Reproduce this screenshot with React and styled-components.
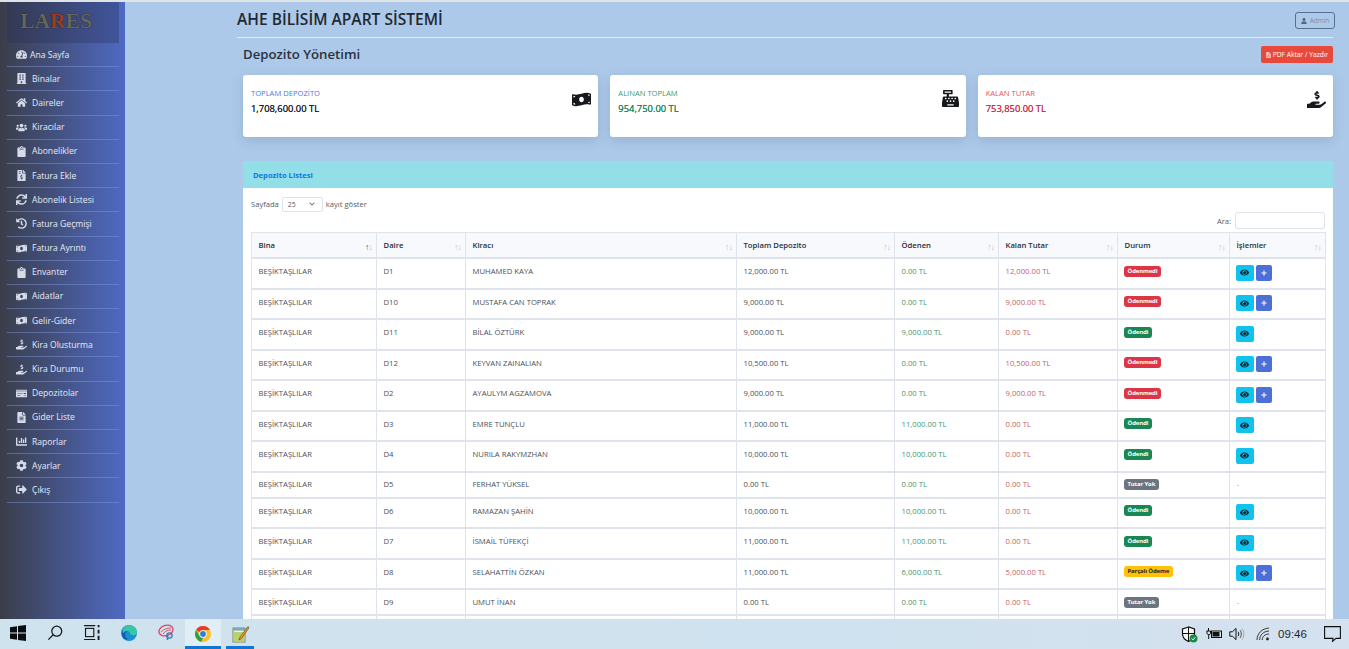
import styled, { createGlobalStyle } from "styled-components";
import * as FaIcons from "react-icons/fa";

const GlobalStyle = createGlobalStyle`
  html, body {
    margin: 0;
    height: 100%;
    overflow: hidden;
    background: #adc9e9;
    font-family: "Open Sans", "Noto Sans", sans-serif;
  }
  * { box-sizing: border-box; }
`;

const Screen = styled.div`
  height: 649px;
  display: grid;
  grid-template-rows: 1fr 30px;
  overflow: hidden;
  border-top: 2px solid #dfe3e8;
`;

const Page = styled.div`
  display: flex;
  min-height: 0;
  overflow: hidden;
`;

const Sidebar = styled.nav`
  width: 125px;
  flex: none;
  background: linear-gradient(90deg, #3a3d49 0%, #4f6ac4 100%);
  padding: 0 6px 0 7px;
`;

const Logo = styled.div`
  height: 41px;
  padding-right: 14px;
  background: rgba(40, 50, 90, 0.35);
  font-family: "Liberation Serif", serif;
  font-size: 21.5px;
  font-weight: 700;
  text-align: center;
  line-height: 39px;
  color: #66665c;
  text-shadow: 0 0 1px #111;
  span { color: #9a3d20; }
`;

const MenuItem = styled.div`
  height: 24.2px;
  display: flex;
  align-items: center;
  padding-left: 9px;
  border-bottom: 1px solid rgba(130, 155, 225, 0.45);
  color: #e6eaf6;
  font-size: 8.6px;
  white-space: nowrap;
  svg { width: 11px; height: 11px; flex: none; color: #d5dbe8; }
`;

const MenuIcon = styled.span`
  width: ${({ $first }) => ($first ? "14px" : "16px")};
  flex: none;
  display: flex;
  align-items: center;
`;

const Main = styled.main`
  flex: 1;
  min-width: 0;
  padding: 0 16px 0 112px;
  overflow: hidden;
`;

const Topbar = styled.header`
  height: 36px;
  display: flex;
  align-items: center;
  justify-content: space-between;
  border-bottom: 1px solid #e3ebf6;
  padding-bottom: 1px;
`;

const Brand = styled.h1`
  margin: 0;
  font-size: 15.55px;
  font-weight: 600;
  color: #212833;
`;

const AdminButton = styled.div`
  width: 40px;
  height: 17px;
  margin: 3px -2px 0 0;
  border: 1px solid #56708f;
  border-radius: 3px;
  color: #7a8da5;
  font-size: 6.5px;
  display: flex;
  align-items: center;
  justify-content: center;
  gap: 3px;
  svg { width: 6px; height: 6px; color: #56657a; }
`;

const Content = styled.div`
  padding-left: 6px;
`;

const TitleRow = styled.div`
  height: 37px;
  padding-bottom: 5px;
  display: flex;
  align-items: center;
  justify-content: space-between;
`;

const PageTitle = styled.h2`
  margin: 0;
  font-size: 13.2px;
  font-weight: 600;
  color: #2a3240;
`;

const PdfButton = styled.div`
  width: 72px;
  height: 17px;
  margin-top: 1px;
  border-radius: 2px;
  background: #e74a3b;
  color: #fff;
  font-size: 6.7px;
  display: flex;
  align-items: center;
  justify-content: center;
  gap: 2px;
  white-space: nowrap;
  svg { width: 5px; height: 6px; opacity: 0.7; }
`;

const Cards = styled.section`
  display: grid;
  grid-template-columns: repeat(3, 1fr);
  gap: 12px;
`;

const Card = styled.article`
  height: 62px;
  background: #fff;
  border-radius: 3px;
  box-shadow: 0 4px 12px rgba(58, 80, 120, 0.18);
  padding: 13px 7px 13px 8px;
  display: flex;
  justify-content: space-between;
`;

const CardLabel = styled.div`
  font-size: 7.6px;
  line-height: 11px;
  color: ${({ $color }) => $color};
  opacity: 0.85;
`;

const CardValue = styled.div`
  margin-top: 3px;
  font-size: 9.4px;
  line-height: 13px;
  font-weight: 500;
  text-shadow: 0 0 0.4px ${({ $color }) => $color};
  color: ${({ $color }) => $color};
`;

const CardIcon = styled.div`
  color: #16181c;
  line-height: 0;
  margin-top: 2px;
  svg { width: ${({ $size }) => $size}px; height: ${({ $size }) => $size}px; }
`;

const ListCard = styled.section`
  margin-top: 24px;
  background: #fff;
  border-radius: 3px 3px 0 0;
`;

const ListHeader = styled.div`
  height: 27px;
  background: #92dfe8;
  display: flex;
  align-items: center;
  padding-left: 10px;
  font-size: 7.6px;
  font-weight: 700;
  color: #1173e6;
`;

const ListBody = styled.div`
  padding: 0 8px;
`;

const LengthRow = styled.div`
  height: 25px;
  padding-top: 7px;
  display: flex;
  align-items: center;
  gap: 3px;
  font-size: 7.6px;
  color: #555c66;
`;

const LengthSelect = styled.div`
  width: 41px;
  height: 15px;
  border: 1px solid #dfe3e8;
  border-radius: 2px;
  display: flex;
  align-items: center;
  justify-content: space-between;
  padding: 0 7px 0 5px;
  font-size: 7px;
  svg { width: 6px; height: 6px; color: #777; }
`;

const SearchRow = styled.div`
  height: 17px;
  margin-top: -1px;
  display: flex;
  align-items: center;
  justify-content: flex-end;
  gap: 4px;
  font-size: 7.6px;
  color: #555c66;
`;

const SearchBox = styled.div`
  width: 90px;
  height: 17px;
  border: 1px solid #dfe3e8;
  border-radius: 2px;
`;

const Table = styled.table`
  width: 1074px;
  border-collapse: collapse;
  table-layout: fixed;
  margin-top: 3px;
  font-size: 7.7px;
  color: #4b5059;
`;

const Th = styled.th`
  height: 25.9px;
  padding: 0 6.5px;
  background: #f7f9fc;
  border: 1px solid #dfe3ec;
  border-bottom: 2px solid #dfe3ec;
  text-align: left;
  font-weight: 600;
  color: #2a2f38;
  position: relative;
`;

const SortArrows = styled.span`
  position: absolute;
  right: 4px;
  top: 7px;
  font-size: 9px;
  font-weight: 400;
  letter-spacing: -1px;
  color: #c3c8d0;
  b { font-weight: 400; color: ${({ $active }) => ($active ? "#666" : "#c3c8d0")}; }
`;

const Td = styled.td`
  height: ${({ $short }) => ($short ? "26px" : "30.5px")};
  padding: 0 6.5px;
  padding-bottom: ${({ $short }) => ($short ? "1px" : "5px")};
  border: 1px solid #dfe3ec;
  border-top: none;
  border-bottom: 2px solid #dfe3ec;
  white-space: nowrap;
  color: ${({ $color }) => $color || "inherit"};
`;

const Badge = styled.span`
  display: inline-block;
  margin-left: -0.5px;
  padding: 0 3.5px;
  height: 11px;
  line-height: 11px;
  border-radius: 3px;
  font-size: 6px;
  font-weight: 700;
  letter-spacing: -0.15px;
  background: ${({ $bg }) => $bg};
  color: ${({ $fg }) => $fg || "#fff"};
  vertical-align: middle;
`;

const Actions = styled.div`
  display: flex;
  gap: 2px;
  margin: 3px 0 0 -1px;
`;

const ActionButton = styled.div`
  width: ${({ $plus }) => ($plus ? "16px" : "18px")};
  height: 16px;
  border-radius: 2px;
  background: ${({ $plus }) => ($plus ? "#4e6fd8" : "#10c2ee")};
  color: ${({ $plus }) => ($plus ? "#fff" : "#10222c")};
  display: flex;
  align-items: center;
  justify-content: center;
  svg { width: ${({ $plus }) => ($plus ? "6px" : "9px")}; height: ${({ $plus }) => ($plus ? "6px" : "9px")}; }
`;

const Taskbar = styled.footer`
  position: relative;
  z-index: 2;
  background: linear-gradient(90deg, #cfe3ee 0%, #cfe2ef 60%, #d5e1ee 100%);
  display: flex;
  align-items: center;
  height: 30px;
`;

const TaskSlot = styled.div`
  width: ${({ $w }) => $w || 37}px;
  margin-left: ${({ $gap }) => $gap || 0}px;
  height: 30px;
  flex: none;
  display: flex;
  align-items: center;
  justify-content: center;
  background: ${({ $active }) => ($active ? "#e2eef5" : "transparent")};
  border-bottom: 3px solid ${({ $open }) => ($open ? "#0a78d4" : "transparent")};
  padding-top: ${({ $open }) => ($open ? "3px" : "0")};
`;

const Tray = styled.div`
  margin-left: auto;
  padding-right: 8px;
  display: flex;
  align-items: center;
  height: 30px;
`;

const TrayIcon = styled.div`
  width: ${({ $w }) => $w}px;
  margin-left: ${({ $gap }) => $gap || 0}px;
  display: flex;
  justify-content: center;
  align-items: center;
`;

const Clock = styled.div`
  width: 29px;
  margin-left: 8px;
  text-align: center;
  font-family: "Liberation Sans", sans-serif;
  font-size: 11.5px;
  color: #1d2730;
`;

const menu = [
  ["Ana Sayfa", FaIcons.FaTachometerAlt, true],
  ["Binalar", FaIcons.FaBuilding],
  ["Daireler", FaIcons.FaHome],
  ["Kiracılar", FaIcons.FaUsers],
  ["Abonelikler", FaIcons.FaClipboard],
  ["Fatura Ekle", FaIcons.FaFileInvoiceDollar],
  ["Abonelik Listesi", FaIcons.FaSync],
  ["Fatura Geçmişi", FaIcons.FaHistory],
  ["Fatura Ayrıntı", FaIcons.FaMoneyBillWave],
  ["Envanter", FaIcons.FaClipboard],
  ["Aidatlar", FaIcons.FaMoneyBillWave],
  ["Gelir-Gider", FaIcons.FaMoneyBillWave],
  ["Kira Olusturma", FaIcons.FaHandHoldingUsd],
  ["Kira Durumu", FaIcons.FaHandHoldingUsd],
  ["Depozitolar", FaIcons.FaMoneyCheck],
  ["Gider Liste", FaIcons.FaFileAlt],
  ["Raporlar", FaIcons.FaChartBar],
  ["Ayarlar", FaIcons.FaCog],
  ["Çıkış", FaIcons.FaSignOutAlt],
];

const cards = [
  ["TOPLAM DEPOZİTO", "1,708,600.00 TL", "#2d62d8", "#1d2128", FaIcons.FaMoneyBillWave, 19],
  ["ALINAN TOPLAM", "954,750.00 TL", "#198754", "#198754", FaIcons.FaCashRegister, 17],
  ["KALAN TUTAR", "753,850.00 TL", "#dc3545", "#c9304a", FaIcons.FaHandHoldingUsd, 19],
];

const columns = [
  ["Bina", 125], ["Daire", 89], ["Kiracı", 271], ["Toplam Depozito", 158],
  ["Ödenen", 104], ["Kalan Tutar", 119], ["Durum", 112], ["İşlemler", 96],
];

const rows = [
  ["D1", "MUHAMED KAYA", "12,000.00 TL", "0.00 TL", "12,000.00 TL", "no"],
  ["D10", "MUSTAFA CAN TOPRAK", "9,000.00 TL", "0.00 TL", "9,000.00 TL", "no"],
  ["D11", "BİLAL ÖZTÜRK", "9,000.00 TL", "9,000.00 TL", "0.00 TL", "yes"],
  ["D12", "KEYVAN ZAINALIAN", "10,500.00 TL", "0.00 TL", "10,500.00 TL", "no"],
  ["D2", "AYAULYM AGZAMOVA", "9,000.00 TL", "0.00 TL", "9,000.00 TL", "no"],
  ["D3", "EMRE TUNÇLU", "11,000.00 TL", "11,000.00 TL", "0.00 TL", "yes"],
  ["D4", "NURILA RAKYMZHAN", "10,000.00 TL", "10,000.00 TL", "0.00 TL", "yes"],
  ["D5", "FERHAT YÜKSEL", "0.00 TL", "0.00 TL", "0.00 TL", "none"],
  ["D6", "RAMAZAN ŞAHİN", "10,000.00 TL", "10,000.00 TL", "0.00 TL", "yes"],
  ["D7", "İSMAİL TÜFEKÇİ", "11,000.00 TL", "11,000.00 TL", "0.00 TL", "yes"],
  ["D8", "SELAHATTİN ÖZKAN", "11,000.00 TL", "6,000.00 TL", "5,000.00 TL", "part"],
  ["D9", "UMUT İNAN", "0.00 TL", "0.00 TL", "0.00 TL", "none"],
];

const statusBadge = {
  no: { text: "Ödenmedi", bg: "#dc3545" },
  yes: { text: "Ödendi", bg: "#198754" },
  none: { text: "Tutar Yok", bg: "#6c757d" },
  part: { text: "Parçalı Ödeme", bg: "#ffc107", fg: "#212529" },
};

const WindowsLogo = () => (
  <svg width="16" height="16" viewBox="0 0 16 16" fill="#0b0d10">
    <path d="M0 2.2 7 1.2V7.5H0zM8 1 16 0V7.5H8zM0 8.5H7V14.8L0 13.8zM8 8.5H16V16L8 15z" />
  </svg>
);

const SearchGlyph = () => (
  <svg width="16" height="16" viewBox="0 0 18 18" fill="none" stroke="#15181c" strokeWidth="1.4">
    <circle cx="11" cy="7" r="5.6" />
    <path d="M7 11 1.5 16.5" />
  </svg>
);

const TaskViewGlyph = () => (
  <svg width="16" height="15" viewBox="0 0 17 16" fill="none" stroke="#15181c" strokeWidth="1.2">
    <path d="M0 .6H12M0 15.4H12" />
    <rect x="1.6" y="3.6" width="8.8" height="8.8" />
    <path d="M15.5 0V2.5M15.5 5V9M15.5 11.5V16" strokeWidth="2" />
  </svg>
);

const EdgeGlyph = () => (
  <svg width="16" height="16" viewBox="0 0 16 16">
    <circle cx="8" cy="8" r="8" fill="#1b8fd6" />
    <path d="M1 9C1.5 4 5 2 8 2c4 0 7 2.5 7 5.5 0 1.6-1.6 2.3-3.6 2.3-2 0-2.8-.6-2.8-1.2C8.6 7 7 6 5.5 6.8 3.5 8 3.5 12 7 14.5 4 15 1 13 1 9z" fill="#0f5ea8" />
    <path d="M2 4C4 1 7 0 9 .2c4 .4 7 3.5 7 7 0 1.8-1.6 3-4 3-1.6 0-2.8-.6-3-1.4C9 7 7 5.6 5 6 3.6 6.3 2.4 7.5 2 9z" fill="#38c7a8" />
  </svg>
);

const SnipGlyph = () => (
  <svg width="18" height="17" viewBox="0 0 18 17" fill="none">
    <ellipse cx="8" cy="6.5" rx="7.2" ry="5.2" stroke="#d9475f" strokeWidth="1.3" transform="rotate(-18 8 6.5)" />
    <path d="M3 8C6 5 9 4 13 4M5 10c2-3 5-4 8-4" stroke="#d9475f" strokeWidth=".9" />
    <circle cx="11.5" cy="11.5" r="2.6" stroke="#2f7fc4" strokeWidth="1.4" />
    <path d="M9.5 11V16" stroke="#2f7fc4" strokeWidth="1.6" />
  </svg>
);

const ChromeGlyph = () => (
  <svg width="16" height="16" viewBox="0 0 16 16">
    <circle cx="8" cy="8" r="8" fill="#fbc02d" />
    <path d="M8 0a8 8 0 0 1 6.93 4H8a4 4 0 0 0-3.46 2L1.07 4A8 8 0 0 1 8 0z" fill="#e53935" />
    <path d="M1.07 4 4.54 10A4 4 0 0 0 8 12L6.3 15.8A8 8 0 0 1 1.07 4z" fill="#2e9e4f" />
    <circle cx="8" cy="8" r="3.7" fill="#fff" />
    <circle cx="8" cy="8" r="2.9" fill="#2f7de1" />
  </svg>
);

const NotepadGlyph = () => (
  <svg width="17" height="17" viewBox="0 0 17 17">
    <rect x="1" y="2" width="12" height="14" fill="#f4f0d2" stroke="#6b6b50" strokeWidth=".8" />
    <rect x="1" y="2" width="12" height="2.6" fill="#7aa7c9" />
    <rect x="2" y="6" width="10" height="9" fill="#b9d36a" />
    <path d="M16 .5 8 11l-1 3 2.7-1.6L16.8 2z" fill="#e8a21a" stroke="#5b3a10" strokeWidth=".6" />
  </svg>
);

const ShieldGlyph = () => (
  <svg width="17" height="17" viewBox="0 0 17 17" fill="none">
    <path d="M7.5 1 1.5 3v5c0 3.5 2.6 6 6 7.5 3.4-1.5 6-4 6-7.5V3z" stroke="#111" strokeWidth="1.2" fill="#f4f8fb" />
    <path d="M7.5 1V15M1.5 7.5H13.5" stroke="#111" strokeWidth="1" />
    <circle cx="12.5" cy="12.5" r="4" fill="#1a8a4a" />
    <path d="M10.6 12.6l1.3 1.3 2.3-2.6" stroke="#fff" strokeWidth="1" />
  </svg>
);

const PowerGlyph = () => (
  <svg width="16" height="12" viewBox="0 0 16 12" fill="none" stroke="#111">
    <rect x="5.5" y="3" width="10" height="6.5" strokeWidth="1" />
    <rect x="6.5" y="4" width="7" height="4.5" fill="#111" stroke="none" />
    <path d="M2.5 0V3M.5 3H4.5V5.5C4.5 7 1 7 1 5.5V3M2.7 7V11" strokeWidth="1" />
  </svg>
);

const VolumeGlyph = () => (
  <svg width="16" height="14" viewBox="0 0 16 14" fill="none" stroke="#111" strokeWidth="1">
    <path d="M.8 4.8H3.4L7 1.4V12.6L3.4 9.2H.8z" />
    <path d="M9 4.8C10 6 10 8 9 9.2" />
    <path d="M11 3C12.8 5 12.8 9 11 11" stroke="#555" />
    <path d="M13 1.5C15.4 4.4 15.4 9.6 13 12.5" stroke="#a0a8b0" />
  </svg>
);

const WifiGlyph = () => (
  <svg width="14" height="14" viewBox="0 0 14 14" fill="none" stroke="#222" strokeWidth=".9">
    <path d="M1 13C1 6.5 6 1.5 13 1" />
    <path d="M3.6 13C3.6 8 7.6 4.2 13 4" />
    <path d="M6.2 13C6.2 9.6 9 7 13 7" />
    <circle cx="11.5" cy="12" r="1.4" fill="#222" stroke="none" />
  </svg>
);

const NotifyGlyph = () => (
  <svg width="17" height="16" viewBox="0 0 17 16" fill="none" stroke="#111" strokeWidth="1.1">
    <path d="M.6.6H16.4V12.4H12L8.5 15.4 9 12.4H.6z" />
  </svg>
);

const App = () => {
  return (
    <>
      <GlobalStyle />
      <Screen>
        <Page>
          <Sidebar>
            <Logo>LA<span>R</span>ES</Logo>
            {menu.map(([label, Icon, first]) => (
              <MenuItem key={label}>
                <MenuIcon $first={first}><Icon /></MenuIcon>
                {label}
              </MenuItem>
            ))}
          </Sidebar>
          <Main>
            <Topbar>
              <Brand>AHE BİLİSİM APART SİSTEMİ</Brand>
              <AdminButton><FaIcons.FaUser />Admin</AdminButton>
            </Topbar>
            <Content>
              <TitleRow>
                <PageTitle>Depozito Yönetimi</PageTitle>
                <PdfButton><FaIcons.FaFilePdf />PDF Aktar / Yazdır</PdfButton>
              </TitleRow>
              <Cards>
                {cards.map(([label, value, labelColor, valueColor, Icon, size]) => (
                  <Card key={label}>
                    <div>
                      <CardLabel $color={labelColor}>{label}</CardLabel>
                      <CardValue $color={valueColor}>{value}</CardValue>
                    </div>
                    <CardIcon $size={size}><Icon /></CardIcon>
                  </Card>
                ))}
              </Cards>
              <ListCard>
                <ListHeader>Depozito Listesi</ListHeader>
                <ListBody>
                  <LengthRow>
                    Sayfada
                    <LengthSelect>25<FaIcons.FaChevronDown /></LengthSelect>
                    kayıt göster
                  </LengthRow>
                  <SearchRow>Ara:<SearchBox /></SearchRow>
                  <Table>
                    <colgroup>
                      {columns.map(([name, width]) => <col key={name} width={width} />)}
                    </colgroup>
                    <thead>
                      <tr>
                        {columns.map(([name], i) => (
                          <Th key={name}>
                            {name}
                            <SortArrows $active={i === 0}><b>↑</b>↓</SortArrows>
                          </Th>
                        ))}
                      </tr>
                    </thead>
                    <tbody>
                      {rows.map((row) => {
                        const [daire, kiraci, toplam, odenen, kalan, status] = row;
                        const badge = statusBadge[status];
                        const short = status === "none";
                        return (
                          <tr key={daire}>
                            <Td $short={short}>BEŞİKTAŞLILAR</Td>
                            <Td $short={short}>{daire}</Td>
                            <Td $short={short}>{kiraci}</Td>
                            <Td $short={short}>{toplam}</Td>
                            <Td $short={short} $color="#3f9670">{odenen}</Td>
                            <Td $short={short} $color="#c4606c">{kalan}</Td>
                            <Td $short={short}><Badge $bg={badge.bg} $fg={badge.fg}>{badge.text}</Badge></Td>
                            <Td $short={short} $color="#9aa0a8">
                              {short ? "-" : (
                                <Actions>
                                  <ActionButton><FaIcons.FaEye /></ActionButton>
                                  {status !== "yes" && <ActionButton $plus><FaIcons.FaPlus /></ActionButton>}
                                </Actions>
                              )}
                            </Td>
                          </tr>
                        );
                      })}
                      <tr>
                        {columns.map(([name]) => <Td key={name} $short />)}
                      </tr>
                    </tbody>
                  </Table>
                </ListBody>
              </ListCard>
            </Content>
          </Main>
        </Page>
        <Taskbar>
          <TaskSlot $w={36}><WindowsLogo /></TaskSlot>
          <TaskSlot><SearchGlyph /></TaskSlot>
          <TaskSlot><TaskViewGlyph /></TaskSlot>
          <TaskSlot $w={38}><EdgeGlyph /></TaskSlot>
          <TaskSlot><SnipGlyph /></TaskSlot>
          <TaskSlot $w={36} $active $open><ChromeGlyph /></TaskSlot>
          <TaskSlot $w={28} $gap={5} $open><NotepadGlyph /></TaskSlot>
          <Tray>
            <TrayIcon $w={17}><ShieldGlyph /></TrayIcon>
            <TrayIcon $w={16} $gap={8}><PowerGlyph /></TrayIcon>
            <TrayIcon $w={16} $gap={7}><VolumeGlyph /></TrayIcon>
            <TrayIcon $w={14} $gap={11}><WifiGlyph /></TrayIcon>
            <Clock>09:46</Clock>
            <TrayIcon $w={17} $gap={17}><NotifyGlyph /></TrayIcon>
          </Tray>
        </Taskbar>
      </Screen>
    </>
  );
};

export default App;
